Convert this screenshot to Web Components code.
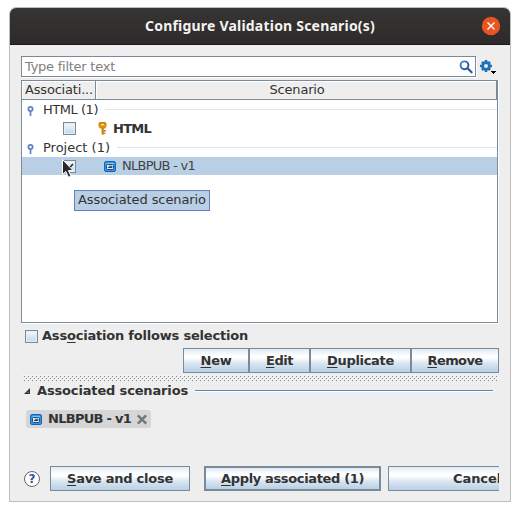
<!DOCTYPE html>
<html lang="en"><head><meta charset="utf-8"><title>Configure Validation Scenario(s)</title>
<style>
html,body{margin:0;width:520px;height:511px;overflow:hidden;background:#fff}
body{font:13px/18px "DejaVu Sans",sans-serif;color:#333}
</style></head><body>
<scenario-dialog></scenario-dialog>
<script>
function define(name, html, setup){
  const t=document.createElement('template');
  t.innerHTML='<style>*{box-sizing:border-box}:host{box-sizing:border-box}</style>'+html;
  customElements.define(name,class extends HTMLElement{
    connectedCallback(){
      if(this.shadowRoot)return;
      this.attachShadow({mode:'open'}).append(t.content.cloneNode(true));
      if(setup)setup(this,this.shadowRoot);
    }
  });
}

// Label whose tracking adapts so that its text takes the given width.
define('ui-label',`<style>:host{display:block;flex:none;white-space:pre;overflow:visible}span{display:inline-block}
::slotted(u){text-decoration:underline;text-decoration-thickness:1px;text-underline-offset:2px;text-decoration-skip-ink:none}</style><span><slot></slot></span>`,(el,root)=>{
  const s=root.querySelector('span'), w=+el.getAttribute('w'), n=el.textContent.length;
  if(w){el.style.width=w+'px'; s.style.letterSpacing=((w-s.getBoundingClientRect().width)/n)+'px';}
});

define('ui-icon',`<style>:host{display:block;flex:none}svg{display:block;overflow:visible}</style><div></div>`,(el,root)=>{
  const icons={
    close:[20,20,'<circle cx="10" cy="10" r="9.2" fill="#eb5420"/><path d="M6.5 6.5l7 7m0-7l-7 7" stroke="#fff" stroke-width="1.4"/>'],
    search:[14,14,'<defs><linearGradient id="g" x2="1" y2="1"><stop stop-color="#3f8bd6"/><stop offset="1" stop-color="#1c4585"/></linearGradient></defs><circle cx="5.5" cy="5.3" r="3.9" fill="#fff" stroke="url(#g)" stroke-width="1.9"/><path d="M8.5 8.3l4.1 4" stroke="#27599f" stroke-width="2.2" stroke-linecap="round"/>'],
    gear:[17,15,'<g fill="#1c70b3"><circle cx="6" cy="6" r="4.7"/><path d="M4.7 0h2.6v12H4.7zM0 4.7h12v2.6H0z"/><path d="M4.7 .3h2.6v11.4H4.7zM.3 4.7h11.4v2.6H.3z" transform="rotate(45 6 6)"/></g><circle cx="6" cy="6" r="2" fill="#eee"/><path d="M11 11h5v1h-1v1h-1v1h-1v-1h-1v-1h-1z" fill="#000"/>'],
    pin:[7,10,'<circle cx="3.5" cy="3" r="2.1" fill="#fff" stroke="#6382bf" stroke-width="1.8"/><path d="M3.5 5v5" stroke="#6382bf" stroke-width="1.7"/>'],
    key:[9,13,'<path d="M1.5 0h6l1 1.5v3L7 6.5H5.9v6L4.8 13l-1.3-1V6.5H2L.5 4.5v-3z" fill="#d08b0c"/><path d="M5.8 8h2v1.5h-2zM5.8 10.5h1.6v1.2H5.8z" fill="#b87605"/><path d="M3 2h3v1H3z" fill="#fff0c0"/><path d="M1.4 3.8h6" stroke="#eeb638"/>'],
    scenario:[12,11,'<rect x=".5" y=".5" width="11" height="10" rx="1.5" fill="#3095e9" stroke="#1764b5"/><path d="M2.5 2.5H10" stroke="#79c8ff"/><rect x="2.5" y="3.5" width="7" height="5" rx="1" fill="#d9e8f5" stroke="#164e8e"/><path d="M4 6.5h4V5.3H5" fill="none" stroke="#334659"/>'],
    remove:[12,11,'<path d="M1.8 1.3l8.4 8.4m0-8.4L1.8 9.7" stroke="#73777a" stroke-width="2.4"/>'],
    open:[6,6,'<path d="M6 0v6H0z" fill="#333"/><path d="M5 3v2H3z" fill="#777"/>'],
    cursor:[12,19,'<path d="M.5.5v15l3.3-3.1 2.7 5.9 2.5-1.1-2.6-5.6h4.7z" fill="#292929" stroke="#fff"/>']};
  const [w,h,p]=icons[el.getAttribute('name')];
  root.querySelector('div').innerHTML=`<svg width="${w}" height="${h}" viewBox="0 0 ${w} ${h}">${p}</svg>`;
});

define('metal-check',`<style>:host{display:block;flex:none;width:13px;height:13px;border:1px solid #7a8a99;background:linear-gradient(#f4f8fc,#c3d7ea);box-shadow:inset 0 0 0 1px #e5edf5}
svg{display:none}:host([checked]) svg{display:block}</style><svg width="11" height="11"><path d="M2 5v4h1.5L9 3" fill="none" stroke="#333" stroke-width="1.7"/></svg>`);

define('metal-button',`<style>:host{display:flex;flex:none;justify-content:center;align-items:center;height:25px;border:1px solid #7a8a99;background:linear-gradient(#e0eaf4 0,#fff 30%,#fff 38%,#dae6f1 62%,#b8cfe5 100%);font-weight:bold}
:host([default]){border-width:2px}:host([cut]){border-right:0;justify-content:flex-start;padding-left:64px;overflow:hidden}</style><slot></slot>`);

define('title-bar',`<style>:host{display:flex;height:37px;background:linear-gradient(#373533,#2d2a2b);border-bottom:1px solid #1d1b1b;border-radius:6px 6px 0 0;color:#fff;align-items:center;padding:0 9px 1px 135px;justify-content:space-between;font:bold 14px/20px "Noto Sans","Open Sans",sans-serif;color:#f5f3f0}</style><slot></slot><ui-icon name="close"></ui-icon>`);

define('filter-bar',`<style>:host{display:flex;height:21px;gap:4px}
.f{display:flex;width:455px;border:1px solid #7a8a99;background:#fff;box-shadow:1px 1px #fff;padding:3px 2px 0 3px;justify-content:space-between;color:#808080}
ui-label{margin-top:-2px}.g{padding-top:4px}</style>
<div class="f"><ui-label w="90">Type filter text</ui-label><ui-icon name="search"></ui-icon></div><div class="g"><ui-icon name="gear"></ui-icon></div>`);

define('group-row',`<style>:host{display:flex;height:19px;padding-left:5px;align-items:center}ui-icon{margin-right:9px;padding-top:2px}hr{flex:1;border:0;height:1px;background:#e3e3e3;margin:0 0 0 7px}</style><ui-icon name="pin"></ui-icon><slot></slot><hr>`);

define('scenario-row',`<style>:host{display:flex;height:19px;padding-left:41px;align-items:center}:host([selected]){height:18px;background:#b8cfe5}
metal-check{margin-right:22px}.i{width:19px;display:flex}:host([bold]){font-weight:bold}:host([bold]) .i{width:15px}</style><metal-check></metal-check><div class="i"><ui-icon></ui-icon></div><slot></slot>`,(el,root)=>{
  if(el.hasAttribute('selected'))root.querySelector('metal-check').setAttribute('checked','');
});
define('row-icon',`<style>:host{display:block;flex:none}</style><slot></slot>`);

define('scenario-table',`<style>:host{display:block;height:243px;width:477px;border:1px solid #7a8a99;background:#fff;box-shadow:1px 1px #fff}
.h{display:flex;height:19px;background:#eee;border-bottom:1px solid #7a8a99;box-shadow:inset 1px 1px #fff}
.a{width:74px;border-right:1px solid #7a8a99;padding-left:3px}.b{flex:1;display:flex;justify-content:center;border-right:1px solid #7a8a99;box-shadow:inset 1px 1px #fff;padding-left:2px}
.r{display:flex;height:19px;align-items:center;padding-left:41px}.r metal-check{margin-right:22px}.bold{font-weight:bold;gap:6px}.bold metal-check{margin-right:16px}.sel{height:18px;background:#b8cfe5;gap:6px;color:#444}</style>
<div class="h"><div class="a"><ui-label w="68">Associati...</ui-label></div><div class="b"><ui-label w="55">Scenario</ui-label></div></div>
<group-row><ui-label w="55">HTML (1)</ui-label></group-row>
<div class="r bold"><metal-check></metal-check><ui-icon name="key"></ui-icon><ui-label w="38">HTML</ui-label></div>
<group-row><ui-label w="67">Project (1)</ui-label></group-row>
<div class="r sel"><metal-check checked></metal-check><ui-icon name="scenario"></ui-icon><ui-label w="73">NLBPUB - v1</ui-label></div>`);

define('split-divider',`<style>:host{display:block}svg{display:block}</style><svg width="475" height="6"><defs><pattern id="d" width="4" height="4" patternUnits="userSpaceOnUse"><path fill="#fff" d="M0 0h1v1H0zM2 2h1v1H2z"/><path fill="#7a8a99" d="M1 1h1v1H1zM3 3h1v1H3z"/></pattern></defs><rect width="475" height="6" fill="url(#d)"/></svg>`);

define('scenario-chip',`<style>:host{display:flex;width:125px;height:18px;border-radius:3px;background:#d6d6d6;align-items:center;padding-left:4px;font-weight:bold}ui-label{margin:0 5px 0 6px}</style><ui-icon name="scenario"></ui-icon><ui-label w="83"><slot></slot>NLBPUB - v1</ui-label><ui-icon name="remove"></ui-icon>`);

define('help-button',`<style>:host{display:flex;flex:none;width:16px;height:16px;border:1px solid #666;border-radius:50%;background:#fff;justify-content:center;color:#3552a5;font:bold 12px/14px "DejaVu Sans",sans-serif}</style>?`);

define('scenario-dialog',`<style>
:host{display:block;position:relative;margin:7px 0 0 9px;width:502px;height:495px;border:1px solid #bdbdbd;border-radius:7px 7px 0 0;background:#eee}
main{display:flex;flex-direction:column;padding:11px 11px 0 11px}
filter-bar{margin-bottom:3px}
.check{display:flex;align-items:center;gap:4px;height:18px;margin:4px 0 3px 4px;font-weight:bold}
.actions{display:flex;width:316px;margin:0 0 2px 162px}
split-divider{margin-left:2px}
.section{display:flex;align-items:center;height:18px;margin:1px 6px 10px 3px;font-weight:bold}.section ui-icon{margin-right:7px}.section hr{flex:1;border:0;height:1px;background:#6382bf;box-shadow:0 1px #fff;margin:0 0 2px 7px}
scenario-chip{margin-left:5px}
footer{display:flex;align-items:center;margin:38px 0 0 3px}help-button{margin-right:10px}
.tip{position:absolute;left:64px;top:182px;width:136px;height:21px;border:1px solid #6382bf;background:#b8cfe5;padding-left:3px;line-height:17px}
.cursor{position:absolute;left:52px;top:151px}
</style>
<title-bar><ui-label w="230">Configure Validation Scenario(s)</ui-label></title-bar>
<main><filter-bar></filter-bar><scenario-table></scenario-table>
<div class="check"><metal-check></metal-check><ui-label w="206">Ass<u>o</u>ciation follows selection</ui-label></div>
<div class="actions">
<metal-button style="width:66px"><ui-label w="31"><u>N</u>ew</ui-label></metal-button>
<metal-button style="width:61px"><ui-label w="27"><u>E</u>dit</ui-label></metal-button>
<metal-button style="width:101px"><ui-label w="67"><u>D</u>uplicate</ui-label></metal-button>
<metal-button style="width:88px"><ui-label w="55"><u>R</u>emove</ui-label></metal-button></div>
<split-divider></split-divider>
<div class="section"><ui-icon name="open"></ui-icon><ui-label w="151">Associated scenarios</ui-label><hr></div>
<scenario-chip></scenario-chip>
<footer><help-button></help-button>
<metal-button style="width:140px"><ui-label w="106"><u>S</u>ave and close</ui-label></metal-button>
<metal-button default style="width:177px;margin:0 7px 0 14px"><ui-label w="143"><u>A</u>pply associated (1)</ui-label></metal-button>
<metal-button cut style="width:111px"><ui-label w="48">Cancel</ui-label></metal-button></footer></main>
<div class="tip"><ui-label w="128">Associated scenario</ui-label></div>
<div class="cursor"><ui-icon name="cursor"></ui-icon></div>`);
</script></body></html>
